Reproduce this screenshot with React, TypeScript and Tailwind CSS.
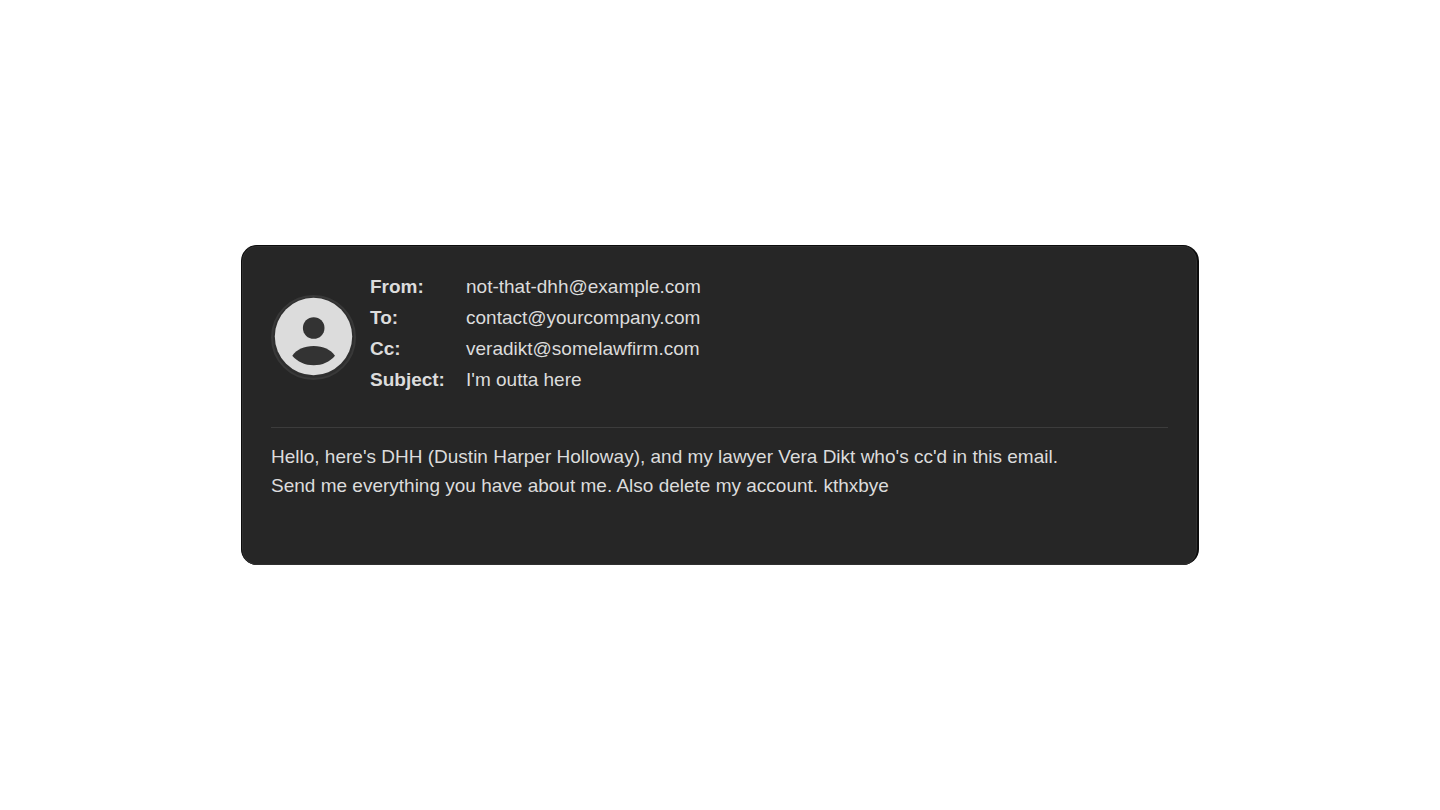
const email = {
  headers: [
    { label: "From:", value: "not-that-dhh@example.com" },
    { label: "To:", value: "contact@yourcompany.com" },
    { label: "Cc:", value: "veradikt@somelawfirm.com" },
    { label: "Subject:", value: "I'm outta here" },
  ],
  body: [
    "Hello, here's DHH (Dustin Harper Holloway), and my lawyer Vera Dikt who's cc'd in this email.",
    "Send me everything you have about me. Also delete my account. kthxbye",
  ],
};

function Avatar() {
  return (
    <svg viewBox="0 0 85 85" className="mt-6 size-[85px] shrink-0" aria-hidden="true">
      <circle cx="42.5" cy="42.5" r="41.5" fill="#2e2e2e" stroke="#383838" strokeWidth="2" />
      <circle cx="42.5" cy="41.5" r="38.7" fill="#dcdcdc" />
      <circle cx="42.7" cy="33" r="10.8" fill="#333333" />
      <path
        d="M21.3 60.8C25.5 54.5 33 51 42.7 51S59.5 54.5 64 60.8C58.8 67 51.2 70.3 42.7 70.3S26.5 67 21.3 60.8Z"
        fill="#333333"
      />
    </svg>
  );
}

function HeaderRow({ label, value }: { label: string; value: string }) {
  return (
    <div className="flex leading-[31px]">
      <dt className="w-24 shrink-0 font-bold">{label}</dt>
      <dd>{value}</dd>
    </div>
  );
}

export default function App() {
  return (
    <main className="flex min-h-screen items-center justify-center bg-white font-['Liberation_Sans',Arial,sans-serif]">
      <article className="w-full max-w-[958px] rounded-2xl border-t border-r-2 border-l border-[#0c0c0c] bg-[#262626] text-[19px] text-[#dcdcdc] inset-ring inset-ring-[#303030]">
        <div className="px-[29px] pt-[25px] pb-[65px]">
          <header className="flex items-start gap-3.5 border-b border-[#3c3c3c] pb-8">
            <Avatar />
            <dl>
              {email.headers.map((h) => (
                <HeaderRow key={h.label} label={h.label} value={h.value} />
              ))}
            </dl>
          </header>
          <div className="pt-3.5 leading-[29px]">
            {email.body.map((line) => (
              <p key={line}>{line}</p>
            ))}
          </div>
        </div>
      </article>
    </main>
  );
}
